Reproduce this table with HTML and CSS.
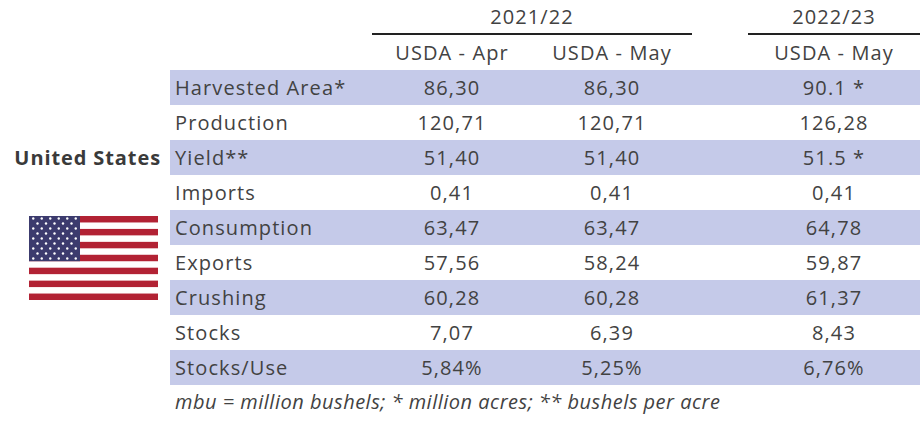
FILE: index.html
```html
<!DOCTYPE html>
<html>
<head>
<meta charset="utf-8">
<link rel="stylesheet" href="styles.css">
</head>
<body>
<div class="wrap">
  <div class="side">
    <div class="country">United States</div>
    <svg class="flag" width="129" height="84" viewBox="0 0 129 84" xmlns="http://www.w3.org/2000/svg">
      <rect width="129" height="84" fill="#fff"/>
      <g fill="#b22234">
        <rect y="0" width="129" height="6.46"/>
        <rect y="12.92" width="129" height="6.46"/>
        <rect y="25.85" width="129" height="6.46"/>
        <rect y="38.77" width="129" height="6.46"/>
        <rect y="51.69" width="129" height="6.46"/>
        <rect y="64.62" width="129" height="6.46"/>
        <rect y="77.54" width="129" height="6.46"/>
      </g>
      <rect width="51" height="45.2" fill="#3c3b6e"/>
      <g fill="#fff" id="stars">
        <g>
          <circle cx="4.25" cy="2.5" r="1.2"/><circle cx="12.75" cy="2.5" r="1.2"/><circle cx="21.25" cy="2.5" r="1.2"/><circle cx="29.75" cy="2.5" r="1.2"/><circle cx="38.25" cy="2.5" r="1.2"/><circle cx="46.75" cy="2.5" r="1.2"/>
          <circle cx="8.5" cy="7.5" r="1.2"/><circle cx="17" cy="7.5" r="1.2"/><circle cx="25.5" cy="7.5" r="1.2"/><circle cx="34" cy="7.5" r="1.2"/><circle cx="42.5" cy="7.5" r="1.2"/>
        </g>
        <g transform="translate(0,10)">
          <circle cx="4.25" cy="2.5" r="1.2"/><circle cx="12.75" cy="2.5" r="1.2"/><circle cx="21.25" cy="2.5" r="1.2"/><circle cx="29.75" cy="2.5" r="1.2"/><circle cx="38.25" cy="2.5" r="1.2"/><circle cx="46.75" cy="2.5" r="1.2"/>
          <circle cx="8.5" cy="7.5" r="1.2"/><circle cx="17" cy="7.5" r="1.2"/><circle cx="25.5" cy="7.5" r="1.2"/><circle cx="34" cy="7.5" r="1.2"/><circle cx="42.5" cy="7.5" r="1.2"/>
        </g>
        <g transform="translate(0,20)">
          <circle cx="4.25" cy="2.5" r="1.2"/><circle cx="12.75" cy="2.5" r="1.2"/><circle cx="21.25" cy="2.5" r="1.2"/><circle cx="29.75" cy="2.5" r="1.2"/><circle cx="38.25" cy="2.5" r="1.2"/><circle cx="46.75" cy="2.5" r="1.2"/>
          <circle cx="8.5" cy="7.5" r="1.2"/><circle cx="17" cy="7.5" r="1.2"/><circle cx="25.5" cy="7.5" r="1.2"/><circle cx="34" cy="7.5" r="1.2"/><circle cx="42.5" cy="7.5" r="1.2"/>
        </g>
        <g transform="translate(0,30)">
          <circle cx="4.25" cy="2.5" r="1.2"/><circle cx="12.75" cy="2.5" r="1.2"/><circle cx="21.25" cy="2.5" r="1.2"/><circle cx="29.75" cy="2.5" r="1.2"/><circle cx="38.25" cy="2.5" r="1.2"/><circle cx="46.75" cy="2.5" r="1.2"/>
          <circle cx="8.5" cy="7.5" r="1.2"/><circle cx="17" cy="7.5" r="1.2"/><circle cx="25.5" cy="7.5" r="1.2"/><circle cx="34" cy="7.5" r="1.2"/><circle cx="42.5" cy="7.5" r="1.2"/>
        </g>
        <g transform="translate(0,40)">
          <circle cx="4.25" cy="2.5" r="1.2"/><circle cx="12.75" cy="2.5" r="1.2"/><circle cx="21.25" cy="2.5" r="1.2"/><circle cx="29.75" cy="2.5" r="1.2"/><circle cx="38.25" cy="2.5" r="1.2"/><circle cx="46.75" cy="2.5" r="1.2"/>
        </g>
      </g>
    </svg>
  </div>
  <div class="main">
    <table class="data">
      <colgroup>
        <col class="c-label"><col class="c-num"><col class="c-num"><col class="c-gap"><col class="c-last">
      </colgroup>
      <thead>
        <tr class="years">
          <th></th>
          <th colspan="2"><div class="year">2021/22</div></th>
          <th></th>
          <th><div class="year">2022/23</div></th>
        </tr>
        <tr class="sources">
          <th></th>
          <th>USDA - Apr</th>
          <th>USDA - May</th>
          <th></th>
          <th>USDA - May</th>
        </tr>
      </thead>
      <tbody>
        <tr class="band"><td class="lbl">Harvested Area*</td><td>86,30</td><td>86,30</td><td></td><td>90.1 *</td></tr>
        <tr><td class="lbl">Production</td><td>120,71</td><td>120,71</td><td></td><td>126,28</td></tr>
        <tr class="band"><td class="lbl">Yield**</td><td>51,40</td><td>51,40</td><td></td><td>51.5 *</td></tr>
        <tr><td class="lbl">Imports</td><td>0,41</td><td>0,41</td><td></td><td>0,41</td></tr>
        <tr class="band"><td class="lbl">Consumption</td><td>63,47</td><td>63,47</td><td></td><td>64,78</td></tr>
        <tr><td class="lbl">Exports</td><td>57,56</td><td>58,24</td><td></td><td>59,87</td></tr>
        <tr class="band"><td class="lbl">Crushing</td><td>60,28</td><td>60,28</td><td></td><td>61,37</td></tr>
        <tr><td class="lbl">Stocks</td><td>7,07</td><td>6,39</td><td></td><td>8,43</td></tr>
        <tr class="band"><td class="lbl">Stocks/Use</td><td>5,84%</td><td>5,25%</td><td></td><td>6,76%</td></tr>
      </tbody>
    </table>
    <p class="note">mbu = million bushels; * million acres; ** bushels per acre</p>
  </div>
</div>
</body>
</html>
```

FILE: styles.css
```css
html, body {
  margin: 0;
  padding: 0;
  background: #fff;
}
body {
  width: 920px;
  height: 421px;
  overflow: hidden;
  font-family: "Open Sans", "Lato", sans-serif;
  color: #424242;
}
.wrap {
  display: grid;
  grid-template-columns: 170px 750px;
}
.side {
  display: flex;
  flex-direction: column;
  align-items: flex-end;
  padding-top: 144px;
}
.country {
  font-weight: 700;
  font-size: 20px;
  line-height: 28px;
  padding-right: 9px;
  letter-spacing: 0.9px;
  color: #3a3a3a;
}
.flag {
  display: block;
  margin-top: 44px;
  margin-right: 12px;
}
.data {
  border-collapse: collapse;
  table-layout: fixed;
  width: 750px;
  font-size: 20px;
  letter-spacing: 1.1px;
}
.c-label { width: 202px; }
.c-num { width: 160px; }
.c-gap { width: 56px; }
.c-last { width: 172px; }
.data th {
  font-weight: 400;
  padding: 0;
  text-align: center;
}
.years th {
  height: 35px;
  vertical-align: top;
}
.year {
  border-bottom: 2px solid #222;
  height: 33px;
  line-height: 34px;
}
.sources th {
  height: 35px;
  line-height: 35px;
}
.data td {
  height: 35px;
  padding: 0;
  text-align: center;
  line-height: 35px;
}
.data td.lbl {
  text-align: left;
  padding-left: 5px;
}
.band td {
  background: #c5cae9;
}
.note {
  margin: 0;
  padding: 3px 0 0 5px;
  font-style: italic;
  font-size: 20px;
  line-height: 28px;
  letter-spacing: 0.5px;
}
```
